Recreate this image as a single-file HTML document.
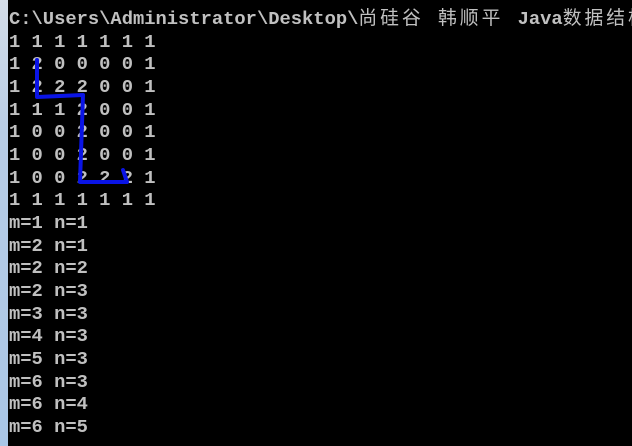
<!DOCTYPE html>
<html><head><meta charset="utf-8"><style>
html,body{margin:0;padding:0;background:#000;width:632px;height:446px;overflow:hidden}
.strip{position:absolute;left:0;top:0;width:8px;height:446px;background:linear-gradient(#d4dde8,#b8cde6 30%,#a9c6e6)}
pre{position:absolute;left:9px;top:8px;margin:0;font-family:"Liberation Mono","Noto Sans CJK SC",monospace;font-size:18.8px;line-height:22.65px;color:#c0c0c0;font-weight:bold;white-space:pre}
.c{letter-spacing:3px;font-weight:normal}
svg{position:absolute;left:0;top:0}
</style></head><body>
<div class="strip"></div>
<pre>C:\Users\Administrator\Desktop\<span class="c">尚硅谷 韩顺平 </span>Java<span class="c">数据结构</span>
1 1 1 1 1 1 1
1 2 0 0 0 0 1
1 2 2 2 0 0 1
1 1 1 2 0 0 1
1 0 0 2 0 0 1
1 0 0 2 0 0 1
1 0 0 2 2 2 1
1 1 1 1 1 1 1
m=1 n=1
m=2 n=1
m=2 n=2
m=2 n=3
m=3 n=3
m=4 n=3
m=5 n=3
m=6 n=3
m=6 n=4
m=6 n=5</pre>
<svg width="632" height="446"><path d="M37 60 L37 97 L83 95 L80 182 L127 182 L123 170" fill="none" stroke="#0a14e6" stroke-width="4" stroke-linejoin="round" stroke-linecap="round"/></svg>
</body></html>
